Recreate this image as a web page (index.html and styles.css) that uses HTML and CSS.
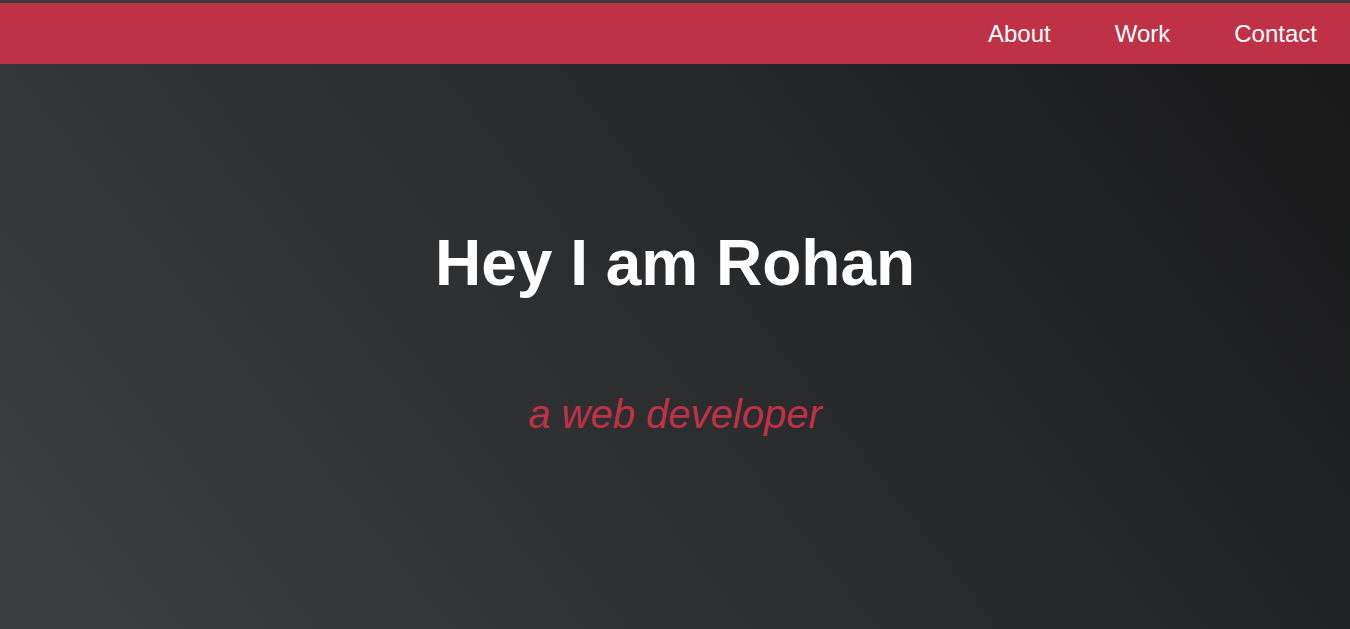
FILE: index.html
```html
<!DOCTYPE html>
<html lang="en">
<head>
<meta charset="utf-8">
<title>Rohan</title>
<link rel="stylesheet" href="styles.css">
</head>
<body>
<header class="topbar">
  <nav class="nav">
    <a class="nav-link" href="#about">About</a>
    <a class="nav-link" href="#work">Work</a>
    <a class="nav-link" href="#contact">Contact</a>
  </nav>
</header>
<main class="hero">
  <h1 class="hero-title">Hey I am Rohan</h1>
  <p class="hero-sub">a web developer</p>
</main>
</body>
</html>
```
FILE: styles.css
```css
* { box-sizing: border-box; }
html, body { margin: 0; padding: 0; height: 100%; }
body {
  font-family: "Liberation Sans", Arial, sans-serif;
  background: #1c1c1d;
  display: flex;
  flex-direction: column;
  overflow: hidden;
}
.topbar {
  border-top: 3px solid #3a3a3c;
  background: #bf3147;
  height: 64px;
  display: flex;
  align-items: center;
  justify-content: flex-end;
  padding-right: 33px;
}
.nav {
  display: flex;
  gap: 64px;
}
.nav-link {
  color: #ffffff;
  text-decoration: none;
  font-size: 24px;
}
.hero {
  flex: 1;
  background: linear-gradient(52deg, #3c3f42, #19191a);
  display: flex;
  flex-direction: column;
  align-items: center;
  padding-top: 162px;
}
.hero-title {
  margin: 0;
  color: #ffffff;
  font-size: 64px;
  font-weight: bold;
}
.hero-sub {
  margin: 92px 0 0;
  color: #bf3147;
  font-size: 40px;
  font-style: italic;
}
```
